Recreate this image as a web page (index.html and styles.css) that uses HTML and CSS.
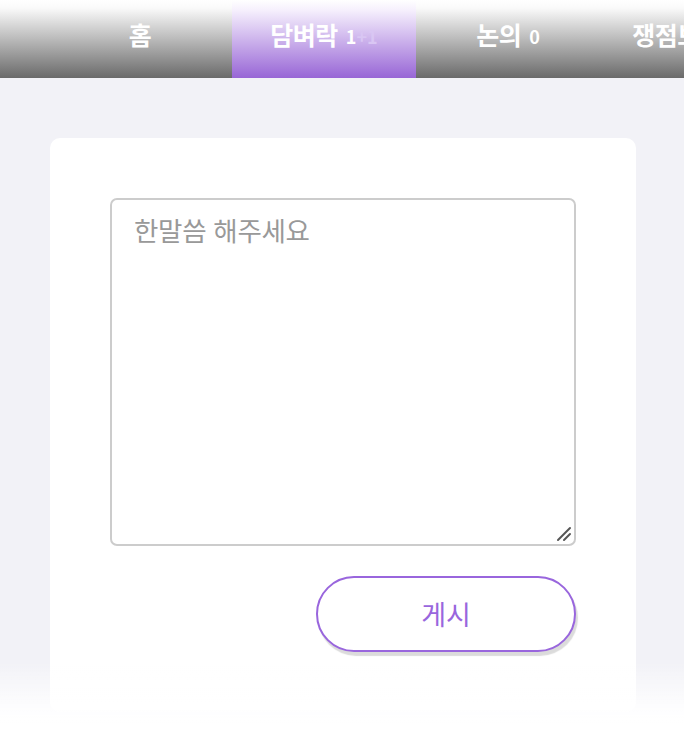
FILE: index.html
```html
<!DOCTYPE html>
<html lang="ko">
<head>
<meta charset="utf-8">
<title>담벼락</title>
<link rel="stylesheet" href="styles.css">
</head>
<body>
<header class="topbar">
  <nav class="tabs">
    <a class="tab">홈</a>
    <a class="tab active">담벼락 <span class="count">1<span class="plus">+1</span></span></a>
    <a class="tab">논의 <span class="count">0</span></a>
    <a class="tab">쟁점보기 <span class="count">10</span></a>
  </nav>
</header>
<main class="page">
  <section class="card">
    <div class="field">
      <textarea class="input" placeholder="한말씀 해주세요"></textarea>
      <svg class="grip" width="16" height="16" viewBox="0 0 16 16" aria-hidden="true">
        <line x1="2" y1="14" x2="14" y2="2" stroke="#555" stroke-width="2" stroke-linecap="round"/>
        <line x1="8" y1="14" x2="14" y2="8" stroke="#555" stroke-width="2" stroke-linecap="round"/>
      </svg>
    </div>
    <div class="actions">
      <button class="post">게시</button>
    </div>
  </section>
</main>
<div class="fade"></div>
</body>
</html>
```
FILE: styles.css
```css
html, body {
  margin: 0;
  padding: 0;
}
body {
  background: #f2f2f7;
  font-family: "Noto Sans CJK KR", "Noto Sans", sans-serif;
  width: 684px;
  height: 752px;
  overflow: hidden;
}
.topbar {
  height: 78px;
  background: linear-gradient(to bottom, #ffffff 0px, #fafafa 8px, #6a6a6a 78px);
  overflow: hidden;
}
.tabs {
  display: flex;
  padding-left: 48px;
  height: 100%;
}
.tab {
  flex: 0 0 184px;
  display: flex;
  align-items: center;
  justify-content: center;
  padding-bottom: 10px;
  box-sizing: border-box;
  color: #ffffff;
  font-weight: 700;
  font-size: 25px;
  letter-spacing: -0.5px;
  white-space: nowrap;
}
.tab.active {
  background: linear-gradient(to bottom, #ffffff 0px, #f6f0fd 10px, #9866d6 78px);
}
.count {
  font-size: 18px;
  margin-left: 8px;
  padding-top: 4px;
  font-weight: 700;
  letter-spacing: 0;
}
.plus {
  color: #d9c6f3;
}
.page {
  padding: 60px 48px 0 50px;
}
.card {
  width: 586px;
  box-sizing: border-box;
  background: #ffffff;
  border-radius: 10px;
  padding: 60px;
}
.field {
  position: relative;
}
.input {
  display: block;
  width: 466px;
  height: 348px;
  box-sizing: border-box;
  border: 2px solid #cccccc;
  border-radius: 7px;
  padding: 10px 22px;
  font-family: inherit;
  font-size: 26.5px;
  letter-spacing: -0.3px;
  color: #333;
  outline: none;
  resize: none;
}
.input::placeholder {
  color: #999999;
}
.grip {
  position: absolute;
  right: 4px;
  bottom: 4px;
}
.actions {
  display: flex;
  justify-content: flex-end;
  margin-top: 30px;
}
.post {
  width: 260px;
  height: 76px;
  border: 2px solid #9966dd;
  border-radius: 38px;
  background: #ffffff;
  color: #9966dd;
  font-family: inherit;
  font-size: 27px;
  padding-bottom: 2px;
  box-shadow: 2px 4px 1px rgba(0, 0, 0, 0.14);
}
.fade {
  position: fixed;
  left: 0;
  right: 0;
  bottom: 0;
  height: 92px;
  background: linear-gradient(to bottom, rgba(255,255,255,0) 0%, rgba(255,255,255,0.9) 55%, #ffffff 70%);
  pointer-events: none;
}
```
